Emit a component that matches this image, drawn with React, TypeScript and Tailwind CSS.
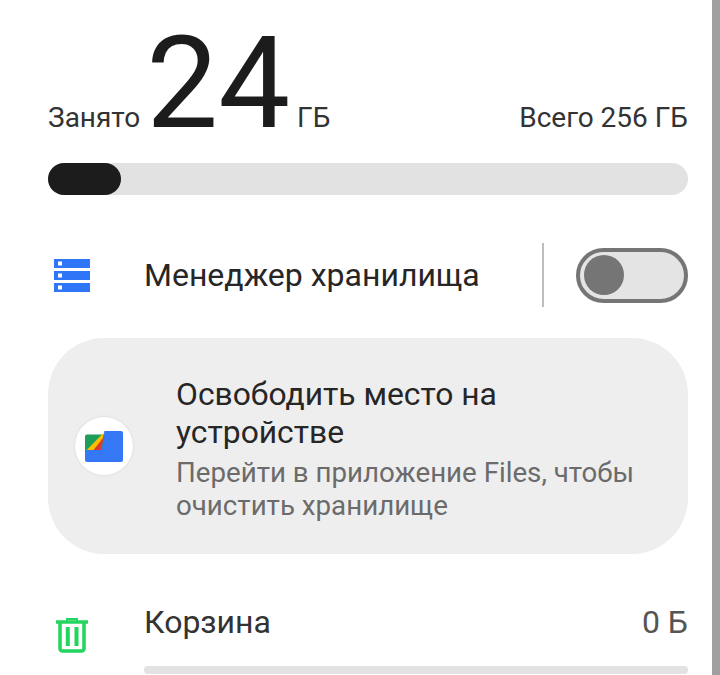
import React from "react"

function StorageIcon() {
  return (
    <svg width="36" height="33" viewBox="0 0 36 33">
      {[0, 12, 24].map((y) => (
        <g key={y}>
          <rect x="0" y={y} width="36" height="9" fill="#2f75f7" />
          <rect x="4" y={y + 2.5} width="4" height="4" fill="#ffffff" />
        </g>
      ))}
    </svg>
  )
}

function FilesIcon() {
  return (
    <svg width="38" height="31" viewBox="0 0 38 31">
      <path d="M2 3.500h17V19H0V5.500a2 2 0 0 1 2-2z" fill="#1e9e58" />
      <path d="M1.700 19 18.800 1.500 16 19z" fill="#fbbc04" />
      <path d="M8.500 19 18.800 6 16 19z" fill="#d93a2b" />
      <path d="M19.300 0H36a2 2 0 0 1 2 2v27a2 2 0 0 1-2 2H2a2 2 0 0 1-2-2V19h15.500c1.500 0 2.800-8 3.800-19z" fill="#3478f6" />
    </svg>
  )
}

function TrashIcon() {
  return (
    <svg width="32" height="35" viewBox="0 0 32 35" fill="none" stroke="#22d55f" strokeWidth="3.500">
      <path d="M0 4h32" />
      <path d="M11 3V1h10v2" strokeWidth="2" />
      <path d="M4 5v25.500a2.500 2.500 0 0 0 2.500 2.500h19a2.500 2.500 0 0 0 2.500-2.500V5" />
      <path d="M11.800 9v19M20.500 9v19" strokeWidth="4" />
    </svg>
  )
}

export default function App() {
  return (
    <div className="flex h-[675px] w-[720px] overflow-hidden bg-white font-['Roboto',sans-serif] text-[#1c1c1c]">
      <div className="w-[712px] pl-12 pr-6">
        <div className="flex h-[163px] items-baseline pt-[8px]">
          <span className="text-[28px] text-[#333333]">Занято</span>
          <span className="ml-[6px] text-[128px] leading-[150px]">24</span>
          <span className="ml-[7px] text-[28px] text-[#333333]">ГБ</span>
          <span className="ml-auto text-[28px] text-[#333333]">Всего 256 ГБ</span>
        </div>
        <div className="h-8 rounded-full bg-[#e2e2e2]">
          <div className="h-8 w-[73px] rounded-full bg-[#1c1c1c]" />
        </div>
        <div className="mt-[48px] flex h-[64px] items-center">
          <div className="ml-[6px] flex w-[90px] shrink-0">
            <StorageIcon />
          </div>
          <span className="text-[32px] text-[#262626]">Менеджер хранилища</span>
          <div className="ml-auto h-[64px] w-[2px] bg-[#bdbdbd]" />
          <div className="ml-8 flex h-[55px] w-[112px] items-center rounded-full border-4 border-[#757575] bg-[#e4e4e4] pl-1">
            <div className="h-10 w-10 rounded-full bg-[#757575]" />
          </div>
        </div>
        <div className="mt-[31px] flex h-[216px] items-center rounded-[56px] bg-[#eeeeee] pl-[27px] pr-[48px]">
          <div className="flex h-[58px] w-[58px] shrink-0 items-center justify-center rounded-full bg-white shadow-[0_0_3px_rgba(0,0,0,0.1)]">
            <FilesIcon />
          </div>
          <div className="ml-[44px] mt-[4px] min-w-0 -translate-x-px">
            <div className="text-[31.8px] leading-[38px] text-[#262626]">Освободить место на устройстве</div>
            <div className="mt-[5px] text-[27.7px] leading-[33px] text-[#6b6b6b]">
              Перейти в приложение Files, чтобы очистить хранилище
            </div>
          </div>
        </div>
        <div className="mt-[48px] flex">
          <div className="ml-2 w-[88px] shrink-0 pt-[16px]">
            <TrashIcon />
          </div>
          <div className="min-w-0 flex-1">
            <div className="flex h-[40px] items-center justify-between text-[32px] text-[#333333]">
              <span>Корзина</span>
              <span className="text-[#555555]">0 Б</span>
            </div>
            <div className="mt-[24px] h-2 rounded-full bg-[#e2e2e2]" />
          </div>
        </div>
      </div>
      <div className="h-full w-2 bg-[#a0a0a0]" />
    </div>
  )
}
